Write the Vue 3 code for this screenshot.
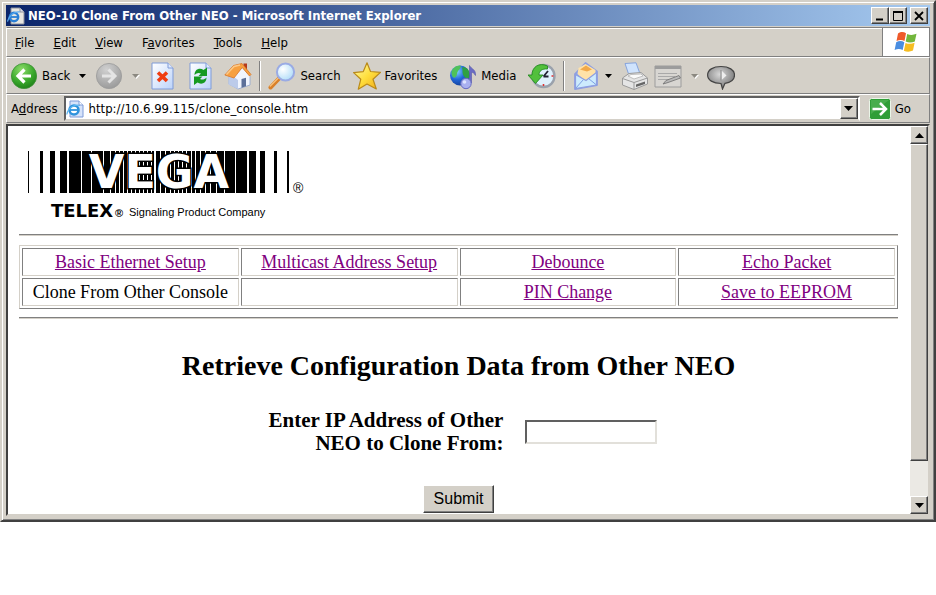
<script setup>
import { ref } from 'vue'

const menus = [
  ['', 'F', 'ile'],
  ['', 'E', 'dit'],
  ['', 'V', 'iew'],
  ['F', 'a', 'vorites'],
  ['', 'T', 'ools'],
  ['', 'H', 'elp'],
]

const links = [
  ['Basic Ethernet Setup', 'Multicast Address Setup', 'Debounce', 'Echo Packet'],
  ['Clone From Other Console', '', 'PIN Change', 'Save to EEPROM'],
]
const current = 'Clone From Other Console'

const address = ref('http://10.6.99.115/clone_console.htm')
const ip = ref('')

// Barcode strips of the logo: [x, width]
const bars = [
  [0, 1], [12, 3], [22, 5], [32, 7], [41, 12], [54, 9], [64, 11], [76, 6], [83, 4],
  [88, 3], [92, 3], [96, 3], [100, 3], [104, 3], [108, 3], [112, 3], [116, 3], [120, 3], [124, 2],
  [128, 4], [133, 4], [138, 4], [143, 3], [147, 3], [151, 3], [155, 3], [159, 4], [164, 3],
  [168, 4], [173, 4], [178, 4], [183, 5], [189, 7], [197, 10], [208, 11],
  [221, 7], [232, 5], [246, 3], [259, 2],
]
</script>

<template>
  <main class="window">
    <header class="title-bar">
      <svg class="doc" viewBox="0 0 18 18" aria-hidden="true">
        <path d="M4 1h9l4 4v12H4z" fill="#e8e6e0" stroke="#8b8f9c" />
        <path d="M13 1v4h4" fill="#d9dde8" stroke="#8b8f9c" />
        <circle cx="7" cy="10" r="4.2" fill="none" stroke="#2a7fd6" stroke-width="2.400" />
        <path d="M3.5 10h7.500" stroke="#2a7fd6" stroke-width="1.800" />
        <path d="M0.500 14.500C2 8 8 4 13 5" fill="none" stroke="#58a9ee" stroke-width="1.200" />
      </svg>
      <h1>NEO-10 Clone From Other NEO - Microsoft Internet Explorer</h1>
      <div class="controls">
        <button type="button" aria-label="Minimize"><svg viewBox="0 0 14 12"><path d="M3 9.500h7" stroke="#000" stroke-width="2" /></svg></button>
        <button type="button" aria-label="Maximize"><svg viewBox="0 0 14 12"><path d="M2.500 1.500h9v9h-9z" fill="none" stroke="#000" /><path d="M2 2h10" stroke="#000" stroke-width="2" /></svg></button>
        <button type="button" class="close" aria-label="Close"><svg viewBox="0 0 14 12"><path d="M3 2l8 8M11 2l-8 8" stroke="#000" stroke-width="1.800" /></svg></button>
      </div>
    </header>

    <div class="menu-row">
      <nav class="menus" aria-label="Menu">
        <button v-for="m in menus" :key="m.join('')" type="button">{{ m[0] }}<u>{{ m[1] }}</u>{{ m[2] }}</button>
      </nav>
      <div class="flag">
        <svg viewBox="0 0 24 22" aria-hidden="true">
          <path d="M4 2.500C7 .5 9.500 .8 12 2.200L10.500 10C8 8.600 5.500 8.500 2.500 10z" fill="#ee5a2b" />
          <path d="M13.200 2.900C16 4.300 19 4.300 22.500 2.800L20.800 10.500C18 11.900 14.500 12 11.700 10.600z" fill="#72b63c" />
          <path d="M2.200 11.200C5 9.700 8 9.800 10.300 11.200L8.700 19C6.300 17.600 3.500 17.500 .6 19z" fill="#4a8de0" />
          <path d="M11.500 11.900C14.500 13.200 17.500 13.200 20.600 11.800L19 19.600C16 21 12.500 21 9.900 19.700z" fill="#f5bd22" />
        </svg>
      </div>
    </div>

    <div class="toolbar" role="toolbar" aria-label="Standard buttons">
      <div class="group nav">
        <button type="button" class="tool">
          <svg class="icon" viewBox="0 0 28 28" aria-hidden="true">
            <defs>
              <radialGradient id="gGreen" cx=".4" cy=".25" r=".8"><stop offset="0" stop-color="#8ddc6a" /><stop offset=".6" stop-color="#3aa92c" /><stop offset="1" stop-color="#1d7d18" /></radialGradient>
              <radialGradient id="gGrey" cx=".4" cy=".25" r=".8"><stop offset="0" stop-color="#d0d0d0" /><stop offset="1" stop-color="#989898" /></radialGradient>
              <linearGradient id="gPage" x1="0" y1="0" x2="1" y2="1"><stop offset="0" stop-color="#fff" /><stop offset="1" stop-color="#bcd3fa" /></linearGradient>
              <radialGradient id="gGlass" cx=".35" cy=".35" r=".8"><stop offset="0" stop-color="#fff" /><stop offset="1" stop-color="#a5d8f8" /></radialGradient>
              <linearGradient id="gStar" x1="0" y1="0" x2="1" y2="1"><stop offset="0" stop-color="#fffbb0" /><stop offset=".5" stop-color="#ffdf3d" /><stop offset="1" stop-color="#f0a818" /></linearGradient>
              <radialGradient id="gGlobe" cx=".35" cy=".3" r=".8"><stop offset="0" stop-color="#7fd0ff" /><stop offset=".5" stop-color="#2267d8" /><stop offset="1" stop-color="#123a90" /></radialGradient>
              <radialGradient id="gChat" cx=".45" cy=".35" r=".7"><stop offset="0" stop-color="#d8d8d8" /><stop offset="1" stop-color="#6b6b6b" /></radialGradient>
            </defs>
            <circle cx="14" cy="14" r="12.600" fill="url(#gGreen)" stroke="#3b8f33" stroke-width=".8" />
            <path d="M21 14H9M14.500 7.500L8 14l6.500 6.500" fill="none" stroke="#fff" stroke-width="3.200" />
          </svg>
          <span>Back</span>
          <svg class="drop" viewBox="0 0 16 8" aria-hidden="true"><path d="M5 2h7L8.500 6z" fill="#000" /></svg>
        </button>
        <button type="button" class="tool" aria-label="Forward">
          <svg class="icon" viewBox="0 0 28 28" aria-hidden="true">
            <circle cx="14" cy="14" r="12.600" fill="url(#gGrey)" stroke="#9a9a9a" stroke-width=".8" />
            <path d="M7 14h12M13.500 7.500L20 14l-6.500 6.500" fill="none" stroke="#e4e4e4" stroke-width="3" />
          </svg>
          <svg class="drop" viewBox="0 0 16 8" aria-hidden="true"><path d="M6 3h7L9.500 7z" fill="#fff" /><path d="M5 2h7L8.500 6z" fill="#8b8880" /></svg>
        </button>
        <button type="button" class="tool" aria-label="Stop">
          <svg class="icon" viewBox="0 0 28 28" aria-hidden="true">
            <path d="M4 1h16l5 5v21H4z" fill="url(#gPage)" stroke="#7f9bd8" />
            <path d="M20 1v5h5" fill="#dfe9fd" stroke="#7f9bd8" />
            <path d="M10 10.500l9 8.500M19 10.500l-9 8.500" stroke="#ef3d13" stroke-width="3.600" />
          </svg>
        </button>
      </div>
      <div class="group pages">
        <button type="button" class="tool" aria-label="Refresh">
          <svg class="icon" viewBox="0 0 28 28" aria-hidden="true">
            <path d="M4 1h16l5 5v21H4z" fill="url(#gPage)" stroke="#7f9bd8" />
            <path d="M20 1v5h5" fill="#dfe9fd" stroke="#7f9bd8" />
            <path d="M8.500 13c0-6 5.500-7.500 9-5L21 5.500V14h-8.500l2.500-2.500c-2.500-1.200-4.500-.5-6.500 1.500z" fill="#159a22" />
            <path d="M20.500 15.500c0 6-5.500 7.500-9 5L8 23v-8.500h8.500L14 17c2.500 1.200 4.500 .5 6.500-1.500z" fill="#159a22" />
          </svg>
        </button>
        <button type="button" class="tool" aria-label="Home">
          <svg class="icon" viewBox="0 0 28 28" aria-hidden="true">
            <path d="M19.500 1.500h3.500v9h-3.500z" fill="#b43a1c" />
            <path d="M5 14.500V22l9 5 12-4v-9L18.500 5.500 11 13z" fill="#f1f5fe" stroke="#8fa5cf" stroke-width=".8" />
            <path d="M4.500 14l5.500 1 4 3v9L4.500 22.500z" fill="#bccbea" />
            <path d="M.8 13L9.500 3.500 18 1.500l9 11-1.500 1.500-7.300-8.500L10 16z" fill="#f7a040" stroke="#d9772a" stroke-width=".8" />
            <path d="M2.500 12.500L10 4.500l6-1.500" fill="none" stroke="#fcc988" stroke-width="1.400" />
            <path d="M17.500 17l4.500-1.200v8.500l-4.500 1.500z" fill="#5d7099" />
          </svg>
        </button>
      </div>
      <span class="separator"></span>
      <div class="group main">
        <button type="button" class="tool">
          <svg class="icon" viewBox="0 0 28 28" aria-hidden="true">
            <path d="M2.500 25.500l9-9.500" stroke="#d9812b" stroke-width="4" stroke-linecap="round" />
            <path d="M1.800 24.500l9-9" stroke="#f9c27c" stroke-width="1.200" />
            <circle cx="17.500" cy="10" r="8.600" fill="url(#gGlass)" stroke="#9aabe4" stroke-width="2" />
          </svg>
          <span>Search</span>
        </button>
        <button type="button" class="tool">
          <svg class="icon" viewBox="0 0 28 28" aria-hidden="true">
            <path d="M14 .8l3.500 8.700 10 .9-7.500 6.800 3.300 9.800-9.300-5-8.700 5.200 2.500-10L.6 10.600l9.700-1z" fill="url(#gStar)" stroke="#b98a1b" stroke-width="1.200" stroke-linejoin="round" />
          </svg>
          <span>Favorites</span>
        </button>
        <button type="button" class="tool">
          <svg class="icon" viewBox="0 0 28 28" aria-hidden="true">
            <circle cx="11" cy="13.500" r="10" fill="url(#gGlobe)" />
            <path d="M2.500 10c1-4 5-7 9-6.500 1 3-2 4-3 6.500s0 3-2 5-4-1-4-5z" fill="#4fc25a" />
            <path d="M13 5.500c3-1 6 1 7 4s1 6-1 7-4-2-5-4 0-5-1-7z" fill="#2fa043" />
            <path d="M20.500 21V3.500c2 4 6.500 3.500 6 10-1.500-2.500-2.500-3-4-3V21z" fill="#6a6bc4" stroke="#5557a8" stroke-width=".6" />
            <circle cx="17" cy="21.500" r="5.200" fill="#a9b0f0" stroke="#686cc0" />
            <circle cx="15.500" cy="20" r="1.800" fill="#dfe4ff" />
          </svg>
          <span>Media</span>
        </button>
        <button type="button" class="tool" aria-label="History">
          <svg class="icon" viewBox="0 0 28 28" aria-hidden="true">
            <circle cx="15.500" cy="14" r="11" fill="#dff1fd" stroke="#9aa1ac" stroke-width="2.400" />
            <path d="M15.500 14.500L20 9M15.500 14.500h5" stroke="#223" stroke-width="1.800" />
            <path d="M15.500 22v2M23.500 14h2" stroke="#d33" stroke-width="1.600" />
            <path d="M19.500 4C11 0 4 5 4 13H0l7.500 8.500 7.500-8.500h-4c0-4 3-6.500 8.500-6z" fill="#52c03c" stroke="#258a22" stroke-width=".9" />
          </svg>
        </button>
      </div>
      <span class="separator"></span>
      <div class="group tools">
        <button type="button" class="tool tight" aria-label="Mail">
          <svg class="icon" viewBox="0 0 28 28" aria-hidden="true">
            <path d="M3 12L13.500 1 25 9.500V23L3 27z" fill="#8ba4ec" stroke="#8f9fe0" stroke-width="1.800" stroke-linejoin="round" />
            <path d="M5.500 12l1-6 7-4 10 6v6l-9 6z" fill="#ffe2a8" />
            <path d="M8 7.500l6-4 6 4-5 2z" fill="#f2a94a" />
            <path d="M3.500 12.500l10.500 6 10.500-8V23L3.500 26.500z" fill="#cdebfd" stroke="#8f9fe0" stroke-width="1.200" />
            <path d="M3.500 26.500l8-9M24.500 23l-8-6.500" stroke="#7da0e4" />
          </svg>
          <svg class="drop" viewBox="0 0 16 8" aria-hidden="true"><path d="M5 2h7L8.500 6z" fill="#000" /></svg>
        </button>
        <button type="button" class="tool" aria-label="Print">
          <svg class="icon" viewBox="0 0 28 28" aria-hidden="true">
            <path d="M4 1.500L15 .8l4 11-11 1.500z" fill="#cfe3fd" stroke="#86a4dd" />
            <path d="M1.500 16L8 11.500l12-1 6.500 5.500v6L13 27.500 1.500 23z" fill="#e5e5e5" stroke="#9a9a9a" />
            <path d="M1.500 16.500L13 20.500l13.500-4.500M13 20.500v7" fill="none" stroke="#9a9a9a" />
            <path d="M7 14l3-1.500 10-.5 2 2-9 3z" fill="#fafafa" stroke="#aaa" stroke-width=".7" />
            <path d="M15 22.500l9-3v2.500l-9 3z" fill="#666" />
          </svg>
        </button>
        <button type="button" class="tool" aria-label="Edit">
          <svg class="icon" viewBox="0 0 28 28" aria-hidden="true">
            <path d="M1 4h26v21H1z" fill="#d8d6d2" stroke="#9c9c9c" />
            <path d="M1 4h26v3H1z" fill="#9c9c9c" />
            <path d="M4 11.500h19M4 14.500h17M4 17.500h11" stroke="#a9a9a9" />
            <path d="M9 22l5-1.500 12.500-4.500-1.500-2.500L12 18.500z" fill="#b9b9b9" stroke="#777" stroke-width=".9" />
          </svg>
          <svg class="drop" viewBox="0 0 16 8" aria-hidden="true"><path d="M6 3h7L9.500 7z" fill="#fff" /><path d="M5 2h7L8.500 6z" fill="#8b8880" /></svg>
        </button>
        <button type="button" class="tool" aria-label="Discuss">
          <svg class="icon" viewBox="0 0 28 28" aria-hidden="true">
            <path d="M14 4.500c8 0 13.500 3.500 13.500 8.500 0 4.500-4 7.500-9.500 8.300L15.500 27l-1.500-5.500C6 21.500 .6 18 .6 13S6 4.500 14 4.500z" fill="url(#gChat)" stroke="#444" stroke-width="1.200" />
            <path d="M14.500 8.500v9.500l5-4.500z" fill="#eee" />
            <path d="M14 8v10.500" stroke="#888" />
          </svg>
        </button>
      </div>
    </div>

    <form class="address-row" @submit.prevent>
      <label for="address">A<u>d</u>dress</label>
      <div class="combo">
        <svg class="doc" viewBox="0 0 18 18" aria-hidden="true">
          <path d="M4 1h9l4 4v12H4z" fill="#d6e3fa" stroke="#7f9bd8" />
          <path d="M13 1v4h4" fill="#fff" stroke="#7f9bd8" />
          <circle cx="8" cy="10" r="4.500" fill="#fff" stroke="#2f93dd" stroke-width="2.600" />
          <path d="M4 10h8" stroke="#2f93dd" stroke-width="1.800" />
          <path d="M.8 14.500C2 8 8 4 14 5.500" fill="none" stroke="#58b4f0" stroke-width="1.200" />
        </svg>
        <input id="address" v-model="address" type="text" />
        <button type="button" class="box-button" aria-label="Show addresses"><svg viewBox="0 0 9 5"><path d="M0 0h9L4.500 5z" /></svg></button>
      </div>
      <button type="submit" class="go">
        <svg viewBox="0 0 22 22" aria-hidden="true">
          <rect x=".5" y=".5" width="21" height="21" rx="2" fill="#2f9e37" stroke="#eaf5e8" />
          <path d="M2 2h18L2 16z" fill="#58b75a" opacity=".6" />
          <path d="M3.500 11H17M11 5l6 6-6 6" fill="none" stroke="#fff" stroke-width="2.500" />
        </svg>
        <span>Go</span>
      </button>
    </form>

    <section class="pane">
      <article class="page">
        <svg class="logo" viewBox="0 0 290 72" role="img" aria-label="VEGA, Telex Signaling Product Company">
          <rect v-for="b in bars" :key="b[0]" :x="b[0]" y="1" :width="b[1]" height="42" fill="#000" shape-rendering="crispEdges" />
          <text class="vega" x="131" y="38" text-anchor="middle">VEGA</text>
          <text class="reg" x="265" y="43">®</text>
          <text class="telex" x="23" y="67">TELEX</text>
          <text class="mark" x="87" y="67">®</text>
          <text class="tag" x="101" y="66">Signaling Product Company</text>
        </svg>
        <hr />
        <table class="links">
          <tbody>
            <tr v-for="(row, r) in links" :key="r">
              <td v-for="(name, c) in row" :key="c">
                <a v-if="name && name !== current" href="#">{{ name }}</a>
                <template v-else>{{ name }}</template>
              </td>
            </tr>
          </tbody>
        </table>
        <hr />
        <h2>Retrieve Configuration Data from Other NEO</h2>
        <form class="clone" @submit.prevent>
          <div class="field">
            <label for="ip">Enter IP Address of Other<br />NEO to Clone From:</label>
            <input id="ip" v-model="ip" type="text" />
          </div>
          <button type="submit" class="submit">Submit</button>
        </form>
      </article>
      <div class="scrollbar">
        <button type="button" class="box-button" aria-label="Scroll up"><svg viewBox="0 0 9 5"><path d="M0 5h9L4.500 0z" /></svg></button>
        <span class="thumb"></span>
        <span class="track"></span>
        <button type="button" class="box-button" aria-label="Scroll down"><svg viewBox="0 0 9 5"><path d="M0 0h9L4.500 5z" /></svg></button>
      </div>
    </section>
  </main>
</template>

<style>
body {
  background: #fff;
}
</style>

<style scoped>
* {
  box-sizing: border-box;
}

button {
  font: inherit;
  color: inherit;
  padding: 0;
  border: 0;
  background: none;
}

svg {
  display: block;
  flex: none;
}

.window {
  padding: 3px 4px 4px;
  border: 2px solid;
  border-color: #d4d0c8 #404040 #404040 #d4d0c8;
  background: #d4d0c8;
  box-shadow: inset 1px 1px #fff, inset -1px -1px #808080;
  font: 13px/16px "DejaVu Sans Condensed", "DejaVu Sans", sans-serif;
  color: #000;
}

.title-bar {
  display: flex;
  align-items: center;
  gap: 3px;
  height: 21px;
  padding: 0 2px 0 1px;
  background: linear-gradient(90deg, #0a246a, #a6caf0);
  color: #fff;
}

.doc {
  width: 18px;
  height: 18px;
}

h1 {
  flex: 1;
  margin: 0;
  font-size: 13px;
  line-height: 16px;
  font-weight: bold;
}

.controls {
  display: flex;
}

.controls button,
.box-button {
  display: flex;
  align-items: center;
  justify-content: center;
  width: 18px;
  height: 17px;
  background: #d4d0c8;
  border: 1px solid;
  border-color: #fff #404040 #404040 #fff;
  box-shadow: inset -1px -1px #808080;
}

.controls svg {
  width: 14px;
  height: 12px;
}

.controls .close {
  margin-left: 3px;
}

.box-button {
  height: 18px;
  flex: none;
}

.box-button svg {
  width: 9px;
  height: 5px;
}

.menu-row {
  display: flex;
  height: 30px;
  margin-top: 1px;
  border: 1px solid;
  border-color: #808080 #808080 #808080 #fff;
}

.menus {
  flex: 1;
  display: flex;
  align-items: center;
  gap: 19px;
  padding-left: 8px;
  border-top: 1px solid #fff;
}

.flag {
  display: flex;
  align-items: center;
  justify-content: center;
  width: 47px;
  background: #fff;
  border-left: 1px solid #808080;
}

.flag svg {
  width: 24px;
  height: 22px;
}

.toolbar {
  display: flex;
  align-items: center;
  gap: 7px;
  height: 37px;
  padding-left: 3px;
  border: 1px solid;
  border-color: #fff #808080 #808080 #fff;
}

.group,
.tool {
  display: flex;
  align-items: center;
  flex: none;
}

.tool {
  gap: 4px;
}

.tight {
  gap: 0;
}

.icon {
  width: 28px;
  height: 28px;
}

.drop {
  width: 16px;
  height: 8px;
}

.nav,
.tools {
  gap: 5px;
}

.pages {
  gap: 10px;
  padding-left: 3px;
}

.main {
  gap: 12px;
}

.separator {
  width: 2px;
  height: 30px;
  background: #808080;
  border-right: 1px solid #fff;
}

.address-row {
  display: flex;
  align-items: center;
  gap: 6px;
  height: 29px;
  padding: 0 18px 0 4px;
  border: 1px solid;
  border-color: #fff #808080 #808080 #fff;
}

.combo {
  flex: 1;
  display: flex;
  align-items: center;
  height: 25px;
  background: #fff;
  border: 2px solid;
  border-color: #606060 #fff #d4d0c8 #606060;
}

.combo input {
  flex: 1;
  min-width: 0;
  padding: 0 0 0 5px;
  border: 0;
  outline: 0;
  background: none;
  font: inherit;
}

.combo .box-button {
  height: 21px;
}

.go {
  display: flex;
  align-items: center;
  gap: 4px;
  padding-left: 3px;
}

.go svg {
  width: 22px;
  height: 22px;
}

.pane {
  display: flex;
  margin-top: 1px;
  background: #fff;
  border: 2px solid;
  border-color: #404040 #d4d0c8 #d4d0c8 #404040;
}

.page {
  flex: 1;
  min-width: 0;
  padding: 24px 12px 1px 11px;
  font: 18px/23px "Liberation Serif", serif;
}

.logo {
  width: 290px;
  height: 72px;
  margin-left: 9px;
}

.vega {
  font: bold 46px "DejaVu Sans", sans-serif;
  fill: #fff;
  stroke: #000;
  stroke-width: 3;
  paint-order: stroke;
}

.telex {
  font: bold 18px "DejaVu Sans", sans-serif;
}

.reg {
  font: 14px "Liberation Sans", sans-serif;
}

.mark {
  font: bold 11px "Liberation Sans", sans-serif;
}

.tag {
  font: 11px "Liberation Sans", sans-serif;
}

hr {
  height: 2px;
  margin: 12px 0 9px;
  border: 0;
  border-top: 1px solid #808080;
  border-bottom: 1px solid #d4d0c8;
}

.links {
  width: 100%;
  table-layout: fixed;
  border: 1px solid;
  border-color: #d4d0c8 #808080 #808080 #d4d0c8;
  border-spacing: 2px;
}

.links td {
  height: 28px;
  padding: 1px;
  border: 1px solid;
  border-color: #808080 #d4d0c8 #d4d0c8 #808080;
  text-align: center;
}

.links + hr {
  margin-top: 8px;
}

a {
  color: #800080;
}

h2 {
  margin: 30px 0 26px;
  font-size: 28px;
  line-height: 34px;
  text-align: center;
}

.clone {
  display: flex;
  flex-direction: column;
  align-items: center;
  gap: 30px;
}

.field {
  display: flex;
  align-items: center;
  gap: 22px;
  padding-left: 9px;
}

.field label {
  font-size: 21px;
  font-weight: bold;
  text-align: right;
}

.field input {
  width: 132px;
  height: 24px;
  border: 2px solid;
  border-color: #606060 #e2e0da #e2e0da #606060;
  outline: 0;
  font: 16px "Liberation Sans", sans-serif;
}

.submit {
  padding: 3px 10px;
  background: #d4d0c8;
  border: 1px solid;
  border-color: #fff #404040 #404040 #fff;
  box-shadow: inset -1px -1px #808080;
  font: 16px/20px "Liberation Sans", sans-serif;
}

.scrollbar {
  display: flex;
  flex-direction: column;
  width: 18px;
  background: #ebe9e4;
}

.thumb {
  flex: 9;
  background: #d4d0c8;
  border: 1px solid;
  border-color: #fff #404040 #404040 #fff;
  box-shadow: inset -1px -1px #808080;
}

.track {
  flex: 1;
}
</style>
